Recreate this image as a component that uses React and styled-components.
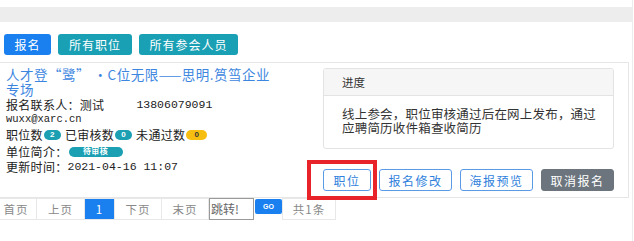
import React from "react";
import styled, { createGlobalStyle } from "styled-components";

const Global = createGlobalStyle`
  html, body { margin: 0; padding: 0; background: #fff; }
  body { font-family: "Noto Sans CJK SC", "Noto Sans", sans-serif; color: #333; overflow: hidden; }
`;

const Page = styled.div`
  width: 633px;
  height: 241px;
  border-right: 1px solid #ececec;
  box-sizing: border-box;
  padding-top: 7px;
  position: relative;
`;

const TopBar = styled.div`
  height: 15px;
  background: #ededed;
`;

const ButtonBar = styled.div`
  display: flex;
  gap: 7px;
  padding: 12px 0 0 4px;
`;

const TopButton = styled.button`
  height: 21px;
  width: ${(p) => p.$w}px;
  padding: 0;
  border: none;
  border-radius: 3px;
  background: ${(p) => (p.$primary ? "#1a80f0" : "#1aa0b4")};
  color: #fff;
  font-family: inherit;
  font-size: 12px;
  letter-spacing: 1px;
  line-height: 21px;
`;

const Card = styled.div`
  margin: 7px 0 0 -1px;
  width: 630px;
  height: 136px;
  box-sizing: border-box;
  border: 1px solid #e6e6e6;
  display: grid;
  grid-template-columns: 323px 1fr;
`;

const Left = styled.div`
  padding: 4px 0 0 6px;
`;

const Title = styled.div`
  color: #3d86e0;
  font-size: 13.5px;
  line-height: 15px;
  letter-spacing: 0.5px;
`;

const Line = styled.div`
  font-size: 12px;
  line-height: ${(p) => p.$lh || 15}px;
  color: #222;
  display: flex;
  align-items: center;
  white-space: nowrap;
  letter-spacing: 0.3px;
`;

const Mono = styled.span`
  font-family: "Liberation Mono", "Noto Sans CJK SC", monospace;
  font-size: ${(p) => p.$size || 11}px;
  margin-left: ${(p) => p.$ml || 0}px;
  letter-spacing: 0;
  color: #222;
`;

const Badge = styled.span`
  display: inline-flex;
  align-items: center;
  justify-content: center;
  height: 10px;
  min-width: ${(p) => p.$w || 13}px;
  padding: 0 ${(p) => p.$px || 2}px;
  margin: 0 4px 0 1px;
  border-radius: 6px;
  background: ${(p) => (p.$yellow ? "#f7be12" : "#1a9fb3")};
  color: ${(p) => (p.$yellow ? "#333" : "#fff")};
  font-size: 8px;
  font-weight: bold;
  line-height: 10px;
  font-family: "Liberation Sans", "Noto Sans CJK SC", sans-serif;
`;

const Right = styled.div`
  padding: 5px 14px 0 0;
  display: flex;
  flex-direction: column;
`;

const Panel = styled.div`
  border: 1px solid #e3e3e3;
  border-radius: 3px;
  height: 81px;
  box-sizing: border-box;
  overflow: hidden;
`;

const PanelHead = styled.div`
  height: 27px;
  background: #f6f6f6;
  border-bottom: 1px solid #e3e3e3;
  box-sizing: border-box;
  padding-left: 18px;
  font-size: 11.5px;
  line-height: 26px;
  color: #333;
`;

const PanelBody = styled.div`
  padding: 11px 12px 0 18px;
  font-size: 12.5px;
  line-height: 14px;
  color: #333;
  letter-spacing: 0.2px;
`;

const Actions = styled.div`
  display: flex;
  gap: 8px;
  margin-top: 20px;
`;

const ActionButton = styled.button`
  height: 22px;
  width: ${(p) => p.$w}px;
  box-sizing: border-box;
  border-radius: 3px;
  border: 1px solid ${(p) => (p.$dark ? "#6c757d" : "#5b9be6")};
  background: ${(p) => (p.$dark ? "#6c757d" : "#fff")};
  color: ${(p) => (p.$dark ? "#fff" : "#2f7fdc")};
  font-family: inherit;
  font-size: 12px;
  letter-spacing: 1.5px;
  padding: 0;
`;

const Highlight = styled.div`
  position: absolute;
  left: 307px;
  top: 160px;
  width: 70px;
  height: 40px;
  box-sizing: border-box;
  border: 4px solid #e8242a;
`;

const Pager = styled.div`
  display: flex;
  margin-left: -4px;
  align-items: flex-start;
`;

const PageItem = styled.div`
  height: 22px;
  width: ${(p) => p.$w}px;
  box-sizing: border-box;
  border: 1px solid #e8e8e8;
  margin-left: -1px;
  background: ${(p) => (p.$active ? "#1a80f0" : "#fff")};
  color: ${(p) => (p.$active ? "#fff" : "#888")};
  font-size: 11.5px;
  line-height: 20px;
  text-align: center;
  letter-spacing: 1px;
`;

const JumpInput = styled.div`
  height: 22px;
  width: 45px;
  box-sizing: border-box;
  border: 1px solid #9a9a9a;
  font-size: 12px;
  line-height: 20px;
  color: #666;
  padding-left: 1px;
  overflow: hidden;
  white-space: nowrap;
`;

const GoButton = styled.div`
  height: 15px;
  width: 27px;
  margin: 1px 1px 0 1px;
  border-radius: 2px;
  background: #1a80f0;
  color: #fff;
  font-family: "Liberation Sans", sans-serif;
  font-size: 7px;
  font-weight: bold;
  line-height: 15px;
  text-align: center;
`;

export default function App() {
  return (
    <>
      <Global />
      <Page>
        <TopBar />
        <ButtonBar>
          <TopButton $primary $w={47}>报名</TopButton>
          <TopButton $w={74}>所有职位</TopButton>
          <TopButton $w={99}>所有参会人员</TopButton>
        </ButtonBar>
        <Card>
          <Left>
            <Title>
              人才登“鹭” ·C位无限——思明.筼筜企业
              <br />
              专场
            </Title>
            <Line $lh={15}>
              报名联系人：测试<Mono $ml={32} $size={11.5}>13806079091</Mono>
            </Line>
            <Line $lh={14}>
              <Mono $size={10.5}>wuxx@xarc.cn</Mono>
            </Line>
            <Line $lh={18}>
              职位数<Badge>2</Badge>已审核数<Badge>0</Badge>未通过数
              <Badge $yellow $w={17}>0</Badge>
            </Line>
            <Line $lh={15}>
              单位简介：<Badge $w={46} $px={4}>待审核</Badge>
            </Line>
            <Line $lh={15}>
              更新时间：<Mono $size={11.5}>2021-04-16 11:07</Mono>
            </Line>
          </Left>
          <Right>
            <Panel>
              <PanelHead>进度</PanelHead>
              <PanelBody>线上参会，职位审核通过后在网上发布，通过应聘简历收件箱查收简历</PanelBody>
            </Panel>
            <Actions>
              <ActionButton $w={48}>职位</ActionButton>
              <ActionButton $w={73}>报名修改</ActionButton>
              <ActionButton $w={73}>海报预览</ActionButton>
              <ActionButton $w={73} $dark>取消报名</ActionButton>
            </Actions>
          </Right>
        </Card>
        <Pager>
          <PageItem $w={42}>首页</PageItem>
          <PageItem $w={49}>上页</PageItem>
          <PageItem $w={31} $active>1</PageItem>
          <PageItem $w={48}>下页</PageItem>
          <PageItem $w={48}>末页</PageItem>
          <JumpInput>跳转!</JumpInput>
          <GoButton>GO</GoButton>
          <PageItem $w={54}>共1条</PageItem>
        </Pager>
        <Highlight />
      </Page>
    </>
  );
}
